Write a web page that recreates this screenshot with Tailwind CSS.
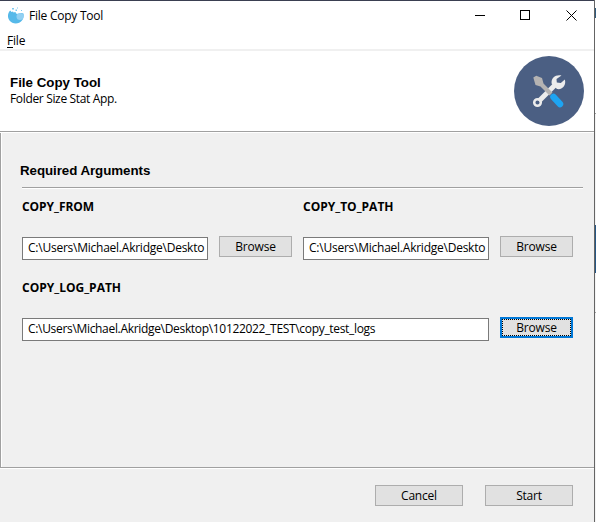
<!DOCTYPE html>
<html lang="en">
<head>
<meta charset="utf-8">
<title>File Copy Tool</title>
<script src="https://cdn.jsdelivr.net/npm/@tailwindcss/browser@4"></script>
</head>
<body class="flex h-[522px] w-[596px] overflow-hidden bg-white font-['Open_Sans','Noto_Sans',sans-serif] text-[12px] leading-4 text-black">
<main class="flex h-[522px] w-[594px] shrink-0 flex-col border-t border-[#3a3f51] bg-[#f0f0f0]">
  <header class="flex h-[30px] shrink-0 items-center bg-white pl-[7px]">
    <svg class="size-[18px] shrink-0" viewBox="0 0 18 18"><path d="M3.200 3.500C.500 6 .300 10.500 2.500 13.500c3 4 9.500 4 12.500 0 1.500-2 2-4.500 1.500-7l-2.500-.5-3 1-2-.5-.5-1.500-2 .5L6 4.500 4.500 5z" fill="#56b9e9"/><circle cx="13" cy="9.500" r="3.500" fill="#92d0f2"/><path d="M5 1h2v1.500H5zM8.500 2.500H10V4H8.500zM14 3h1v1h-1zM10 .500h1v1h-1z" fill="#7cc9ef"/></svg>
    <span class="ml-1 grow whitespace-nowrap tracking-[-0.24px]">File Copy Tool</span>
    <svg class="h-[30px] w-[137px] shrink-0" viewBox="0 0 137 30" fill="none" stroke="#000" shape-rendering="crispEdges"><path d="M18 14.500h10M63.500 9.500h9v9h-9z"/><path shape-rendering="auto" d="m109.500 9.500 10 10m0-10-10 10"/></svg>
  </header>
  <nav class="h-[18px] shrink-0 bg-white pl-[7px] pt-[2px]"><span class="tracking-[-0.2px]"><span class="underline underline-offset-2">F</span>ile</span></nav>
  <section class="flex h-[82px] shrink-0 justify-between border-t-2 border-[#f0f0f0] bg-white pl-[10px] pr-[10px]">
    <div class="pt-[24px]">
      <h1 class="font-['Liberation_Sans',sans-serif] text-[13.33px] font-bold leading-4">File Copy Tool</h1>
      <p class="whitespace-nowrap tracking-[-0.34px]">Folder Size Stat App.</p>
    </div>
    <svg class="mt-[5px] size-[70px]" viewBox="0 0 70 70"><circle cx="35" cy="35" r="35" fill="#4b5f83"/><path d="M25 45 42 28" stroke="#ececec" stroke-width="5"/><circle cx="23.500" cy="46.500" r="3.300" fill="none" stroke="#ececec" stroke-width="2.500"/><path d="M47.500 19.500c-5-1.500-11 2-9.800 8.300l5.300 5.300c6 1 9.500-4.400 7.800-9.500l-4 3.400-4-.5-.3-3.500z" fill="#ececec"/><path d="m19.300 21.500 3-1.800 5.700 2.300 1.500 5.500 9 9-3 3-9-9-5-1.500z" fill="#b5b3b2"/><path d="m39.500 41 6.500 7" stroke="#1da4f2" stroke-width="6.500" stroke-linecap="round"/></svg>
  </section>
  <div class="h-[2px] shrink-0 border-t border-[#a0a0a0] bg-white"></div>
  <section class="flex h-[334px] shrink-0 flex-col border-l border-[#a0a0a0]">
    <div class="grow border-l border-white pl-5">
      <h2 class="ml-[-2px] pt-[30px] font-['Liberation_Sans',sans-serif] text-[13.33px] font-bold leading-4 tracking-[-0.06px]">Required Arguments</h2>
      <div class="mt-[8px] h-[2px] w-[561px] border-t border-[#a0a0a0] bg-white"></div>
      <div class="flex pt-[10px]">
        <div class="w-[281px]">
          <h3 class="font-bold tracking-[-0.05px]">COPY_FROM</h3>
          <div class="mt-[21px] flex gap-[11px]">
            <div class="mt-px h-[23px] w-[186px] overflow-hidden whitespace-nowrap border border-[#7a7a7a] bg-white pl-[5px] leading-[20px] tracking-[-0.24px]">C:\Users\Michael.Akridge\Deskto</div>
            <button class="h-[21px] w-[73px] border border-[#adadad] bg-[#e1e1e1] leading-[19px] tracking-[-0.2px]">Browse</button>
          </div>
        </div>
        <div class="w-[281px]">
          <h3 class="font-bold">COPY_TO_PATH</h3>
          <div class="mt-[21px] flex gap-[11px]">
            <div class="mt-px h-[23px] w-[186px] overflow-hidden whitespace-nowrap border border-[#7a7a7a] bg-white pl-[5px] leading-[20px] tracking-[-0.24px]">C:\Users\Michael.Akridge\Deskto</div>
            <button class="h-[21px] w-[73px] border border-[#adadad] bg-[#e1e1e1] leading-[19px] tracking-[-0.2px]">Browse</button>
          </div>
        </div>
      </div>
      <h3 class="mt-[20px] font-bold">COPY_LOG_PATH</h3>
      <div class="mt-[21px] flex gap-[11px]">
        <div class="mt-px h-[23px] w-[467px] border border-[#7a7a7a] bg-white pl-[5px] leading-[20px] tracking-[-0.32px]">C:\Users\Michael.Akridge\Desktop\10122022_TEST\copy_test_logs</div>
        <div class="h-[21px] w-[73px] border-2 border-[#0078d7] bg-[#e1e1e1]"><button class="block h-[17px] w-[69px] border border-dotted border-black leading-[15px] tracking-[-0.2px]">Browse</button></div>
      </div>
    </div>
  </section>
  <div class="h-[2px] shrink-0 border-t border-[#a0a0a0] bg-white"></div>
  <footer class="flex grow justify-end gap-[22px] pr-[21px] pt-4">
    <button class="h-[21px] w-[88px] border border-[#adadad] bg-[#e1e1e1] leading-[19px] tracking-[-0.2px]">Cancel</button>
    <button class="h-[21px] w-[88px] border border-[#adadad] bg-[#e1e1e1] leading-[19px] tracking-[-0.2px]">Start</button>
  </footer>
</main>
<aside class="flex w-[2px] shrink-0 flex-col border-l border-[#646464]">
  <div class="h-2"></div><div class="h-[10px] bg-[#315b7d]"></div><div class="h-[95px]"></div><div class="h-px bg-[#a0a0a0]"></div><div class="h-[111px] bg-[#f4f4f4]"></div><div class="h-12 bg-[#255684]"></div><div class="h-[39px] bg-[#f4f4f4]"></div><div class="h-px bg-[#a0a0a0]"></div><div class="grow bg-[#f4f4f4]"></div>
</aside>
</body>
</html>
